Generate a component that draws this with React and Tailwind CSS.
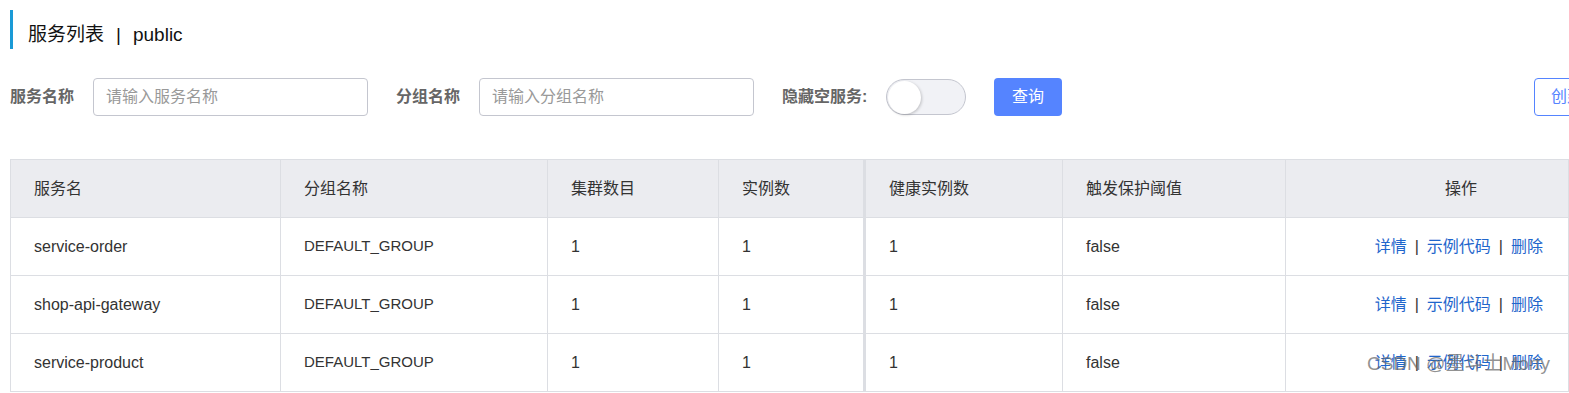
import React from 'react';

const rows = [
  { name: 'service-order', group: 'DEFAULT_GROUP', clusters: 1, instances: 1, healthy: 1, threshold: 'false' },
  { name: 'shop-api-gateway', group: 'DEFAULT_GROUP', clusters: 1, instances: 1, healthy: 1, threshold: 'false' },
  { name: 'service-product', group: 'DEFAULT_GROUP', clusters: 1, instances: 1, healthy: 1, threshold: 'false' },
];

const font = { fontFamily: '"Liberation Sans", "Noto Sans CJK SC", sans-serif' };

const Cell = ({ children, className = '' }) => (
  <div className={`h-[58px] flex items-center pl-[23px] border-b border-r border-[#dcdee3] whitespace-nowrap ${className}`}>
    {children}
  </div>
);

const App = () => {
  return (
    <div
      className="relative w-[1569px] h-[393px] overflow-hidden bg-white text-[#333]"
      style={font}
    >
      {/* Title */}
      <div className="pt-[10px] pl-[10px]">
        <div className="h-[39px] border-l-[3px] border-[#1a9ad6] pl-[15px] flex items-end pb-0 text-[19px] text-[#111]">
          <span>服务列表</span>
          <span className="mx-[12px]">|</span>
          <span>public</span>
        </div>
      </div>

      {/* Filters */}
      <div className="mt-[29px] pl-[10px] flex items-center w-[1720px] whitespace-nowrap">
        <span className="shrink-0 text-[16px] font-bold text-[#666] w-[66px]">服务名称</span>
        <input
          className="shrink-0 ml-[17px] w-[275px] h-[38px] border border-[#c4c6cf] rounded-[4px] px-[12px] text-[16px] outline-none placeholder-[#999]"
          placeholder="请输入服务名称"
        />
        <span className="shrink-0 ml-[28px] text-[16px] font-bold text-[#666] w-[66px]">分组名称</span>
        <input
          className="shrink-0 ml-[17px] w-[275px] h-[38px] border border-[#c4c6cf] rounded-[4px] px-[12px] text-[16px] outline-none placeholder-[#999]"
          placeholder="请输入分组名称"
        />
        <span className="ml-[28px] text-[16px] font-bold text-[#666] w-[88px] shrink-0">隐藏空服务:</span>
        <div className="ml-[16px] shrink-0 w-[80px] h-[36px] rounded-full border border-[#c4c6cf] bg-[#f1f2f6] flex items-center p-[1px]">
          <div className="w-[33px] h-[33px] rounded-full bg-white shadow-[1px_1px_3px_rgba(0,0,0,0.2)]" />
        </div>
        <button className="ml-[28px] shrink-0 w-[68px] h-[38px] rounded-[4px] bg-[#5584ff] text-white text-[16px]">
          查询
        </button>
        <button className="ml-[472px] shrink-0 w-[110px] h-[38px] rounded-[4px] border border-[#5584ff] text-[#5584ff] text-[16px] text-left pl-[16px] bg-white">
          创建服务
        </button>
      </div>

      {/* Table */}
      <div className="mt-[43px] ml-[10px] border-l border-t border-[#dcdee3] grid grid-cols-[270px_267px_171px_147px_197px_223px_1fr] text-[16px]">
        <Cell className="bg-[#ebecf0]">服务名</Cell>
        <Cell className="bg-[#ebecf0]">分组名称</Cell>
        <Cell className="bg-[#ebecf0]">集群数目</Cell>
        <Cell className="bg-[#ebecf0] border-r-[3px]">实例数</Cell>
        <Cell className="bg-[#ebecf0]">健康实例数</Cell>
        <Cell className="bg-[#ebecf0]">触发保护阈值</Cell>
        <Cell className="bg-[#ebecf0] justify-center pl-[68px]">操作</Cell>
        {rows.map((r) => (
          <React.Fragment key={r.name}>
            <Cell>{r.name}</Cell>
            <Cell><span className="text-[15px]">{r.group}</span></Cell>
            <Cell>{r.clusters}</Cell>
            <Cell className="border-r-[3px]">{r.instances}</Cell>
            <Cell>{r.healthy}</Cell>
            <Cell>{r.threshold}</Cell>
            <Cell className="justify-end pr-[25px]">
              <a className="text-[#1f66cc] cursor-pointer">详情</a>
              <span className="mx-[8px] text-[#333]">|</span>
              <a className="text-[#1f66cc] cursor-pointer">示例代码</a>
              <span className="mx-[8px] text-[#333]">|</span>
              <a className="text-[#1f66cc] cursor-pointer">删除</a>
            </Cell>
          </React.Fragment>
        ))}
      </div>

      {/* Watermark */}
      <div className="absolute left-[1367px] top-[350px] text-[19px] text-[rgba(110,110,110,0.75)] pointer-events-none whitespace-nowrap">
        CSDN @墨斗士Morty
      </div>
    </div>
  );
};

export default App;
